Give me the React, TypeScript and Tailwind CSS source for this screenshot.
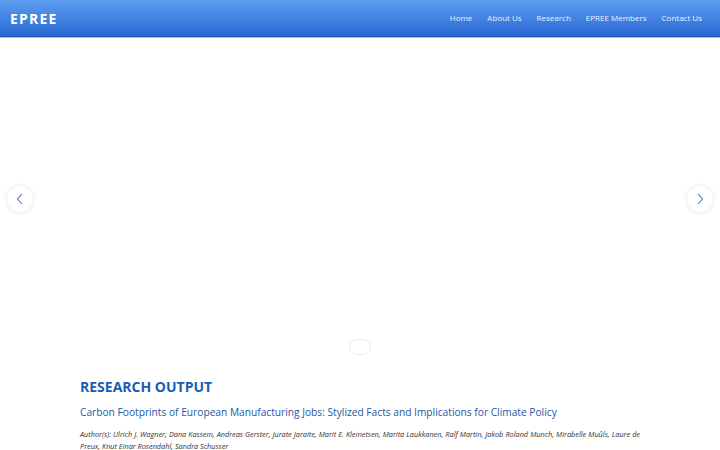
import React from "react";

const links = ["Home", "About Us", "Research", "EPREE Members", "Contact Us"];

const Arrow = ({ dir }: { dir: "left" | "right" }) => (
  <button className="flex h-[26px] w-[26px] items-center justify-center rounded-full bg-white shadow-[0_0_4px_rgba(0,0,0,0.12)]">
    <svg width="10" height="12" viewBox="0 0 10 12" fill="none" stroke="#4a72b8" strokeWidth="1.1">
      {dir === "left" ? <path d="M7 1 L2.5 6 L7 11" /> : <path d="M3 1 L7.5 6 L3 11" />}
    </svg>
  </button>
);

export default function App() {
  return (
    <div className="flex h-[450px] w-[720px] flex-col overflow-hidden bg-white font-['Open_Sans',sans-serif]">
      <header className="flex h-[37px] shrink-0 items-center justify-between border-b border-[#1d57b3] bg-gradient-to-b from-[#5d9ef2] to-[#2a68d2] pl-[10px] pr-[18px] shadow-[0_1px_0_#9cc3f0]">
        <span className="text-[14px] font-bold tracking-[1.2px] text-white">EPREE</span>
        <nav className="flex gap-[15px] text-[8px] text-[#e8f0fc]">
          {links.map((l) => (
            <a key={l} href="#">{l}</a>
          ))}
        </nav>
      </header>

      {/* slider */}
      <section className="relative h-[318px] shrink-0">
        <div className="absolute left-[7px] top-[149px]">
          <Arrow dir="left" />
        </div>
        <div className="absolute right-[7px] top-[149px]">
          <Arrow dir="right" />
        </div>
        <div className="absolute left-[349px] top-[302px] h-[16px] w-[22px] rounded-[8px] border border-[#ececec]" />
      </section>

      <main className="px-[80px] pt-[22px]">
        <h2 className="text-[14px] font-bold leading-[20px] text-[#1a5cb4]">RESEARCH OUTPUT</h2>
        <h3 className="mt-[7px] text-[10.2px] leading-[16px] text-[#1c58a8]">
          Carbon Footprints of European Manufacturing Jobs: Stylized Facts and Implications for Climate Policy
        </h3>
        <p className="mt-[8px] text-justify text-[7.3px] italic leading-[12px] text-[#333]">
          Author(s): Ulrich J. Wagner, Dana Kassem, Andreas Gerster, Jurate Jaraite, Marit E. Klemetsen, Marita Laukkanen, Ralf Martin, Jakob Roland Munch, Mirabelle Muûls, Laure de Preux, Knut Einar Rosendahl, Sandra Schusser
        </p>
      </main>
    </div>
  );
}
